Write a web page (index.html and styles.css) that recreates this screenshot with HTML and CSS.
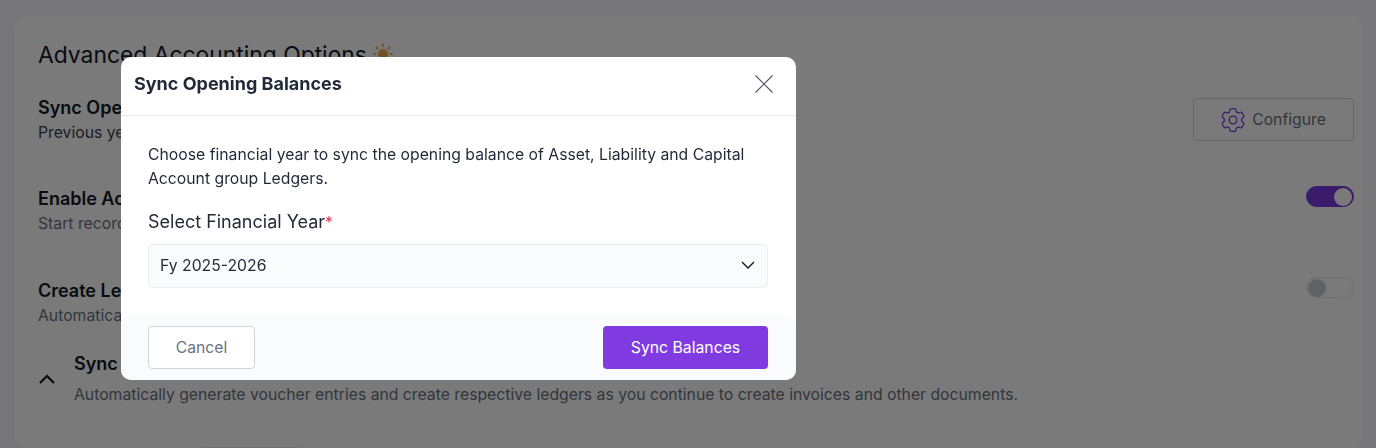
FILE: index.html
```html
<!DOCTYPE html>
<html>
<head>
	<title>Advanced Accounting Options</title>
	<link rel="stylesheet" href="styles.css">
</head>
<body>
	<div class="card">
		<h2 class="card-title">Advanced Accounting Options
			<svg class="sun" width="20" height="20" viewBox="0 0 20 20">
				<circle cx="10" cy="11" r="5" fill="#f2ab4a"/>
				<g stroke="#f2ab4a" stroke-width="2" stroke-linecap="round">
					<path d="M10 1.500v1.500M3.500 4.500l1 1M16.500 4.500l-1 1M1 11h1.500M17.500 11h1.500"/>
				</g>
			</svg>
		</h2>

		<div class="option option-first">
			<div>
				<div class="option-name">Sync Opening Balances</div>
				<div class="option-desc">Previous year closing balances can be carried forward.</div>
			</div>
			<button class="btn-configure">
				<svg width="24" height="24" viewBox="2.500 2.500 19 19" fill="none" stroke="#7c3ae0" stroke-width="1" stroke-linejoin="round">
					<path d="M9.594 3.940c.09-.542.56-.94 1.110-.94h2.593c.55 0 1.020.398 1.110.94l.213 1.281c.063.374.313.686.645.87.074.04.147.083.22.127.324.196.72.257 1.075.124l1.217-.456a1.125 1.125 0 011.370.49l1.296 2.247a1.125 1.125 0 01-.26 1.431l-1.003.827c-.293.24-.438.613-.431.992a6.759 6.759 0 010 .255c-.007.378.138.75.43.99l1.005.828c.424.35.534.954.26 1.430l-1.298 2.247a1.125 1.125 0 01-1.369.491l-1.217-.456c-.355-.133-.75-.072-1.076.124a6.570 6.570 0 01-.22.128c-.331.183-.581.495-.644.869l-.213 1.280c-.09.543-.56.941-1.110.941h-2.594c-.55 0-1.020-.398-1.110-.94l-.213-1.281c-.062-.374-.312-.686-.644-.87a6.520 6.520 0 01-.22-.127c-.325-.196-.72-.257-1.076-.124l-1.217.456a1.125 1.125 0 01-1.369-.49l-1.297-2.247a1.125 1.125 0 01.26-1.431l1.004-.827c.292-.24.437-.613.43-.992a6.932 6.932 0 010-.255c.007-.378-.138-.75-.43-.99l-1.004-.828a1.125 1.125 0 01-.26-1.430l1.297-2.247a1.125 1.125 0 011.370-.491l1.216.456c.356.133.751.072 1.076-.124.072-.044.146-.087.22-.128.332-.183.582-.495.644-.869l.214-1.281z"/>
					<circle cx="12" cy="12" r="3"/>
				</svg>
				Configure
			</button>
		</div>

		<div class="option option-second">
			<div>
				<div class="option-name">Enable Accounting</div>
				<div class="option-desc muted">Start recording accounting entries for your business.</div>
			</div>
			<span class="toggle toggle-on"><span class="knob"></span></span>
		</div>

		<div class="option option-third">
			<div>
				<div class="option-name">Create Ledgers</div>
				<div class="option-desc muted">Automatically create ledgers for your parties and items.</div>
			</div>
			<span class="toggle"><span class="knob"></span></span>
		</div>

		<div class="sync-row">
			<svg class="chevron-up" width="16" height="10" viewBox="0 0 16 10" fill="none" stroke="#111827" stroke-width="2.200">
				<path d="M1 9l7-7 7 7"/>
			</svg>
			<div>
				<div class="option-name">Sync Vouchers</div>
				<div class="option-desc muted sync-desc">Automatically generate voucher entries and create respective ledgers as you continue to create invoices and other documents.</div>
			</div>
		</div>

		<div class="next-btn"></div>
	</div>

	<div class="overlay">
		<div class="modal">
			<div class="modal-header">
				<h3>Sync Opening Balances</h3>
				<svg class="close" width="20" height="20" viewBox="0 0 20 20" stroke="#4b5563" stroke-width="1.100" fill="none">
					<path d="M1.500 1.500l17 17M18.500 1.500l-17 17"/>
				</svg>
			</div>
			<div class="modal-body">
				<p>Choose financial year to sync the opening balance of Asset, Liability and Capital Account group Ledgers.</p>
				<label class="field-label">Select Financial Year<span class="req">*</span></label>
				<div class="select">
					<span>Fy 2025-2026</span>
					<svg width="14" height="8" viewBox="0 0 14 8" fill="none" stroke="#111827" stroke-width="1.400">
						<path d="M1 1l6 6 6-6"/>
					</svg>
				</div>
			</div>
			<div class="modal-footer">
				<button class="btn btn-cancel">Cancel</button>
				<button class="btn btn-primary">Sync Balances</button>
			</div>
		</div>
	</div>
</body>
</html>
```

FILE: styles.css
```css
* {
	box-sizing: border-box;
}

html,
body {
	height: 100%;
	overflow: hidden;
}

body {
	margin: 0;
	padding: 16px 0 0 15px;
	background-color: #f8f9fc;
	font-family: Inter, "Liberation Sans", sans-serif;
	color: #111827;
}

.card {
	width: 1347px;
	height: 432px;
	padding: 24px 8px 0 23px;
	background-color: #fff;
	border-radius: 10px;
	overflow: hidden;
}

.card-title {
	margin: 0;
	font-size: 22.85px;
	line-height: 30px;
	font-weight: 400;
}

.sun {
	vertical-align: 0;
}

.option {
	display: flex;
	justify-content: space-between;
	align-items: flex-start;
}

.option-first {
	margin-top: 26px;
	height: 91px;
}

.option-second {
	height: 92px;
}

.option-third {
	height: 73px;
}

.option-name {
	font-size: 18px;
	line-height: 24px;
	font-weight: 600;
}

.option-desc {
	margin-top: 3px;
	font-size: 15.75px;
	line-height: 20px;
	color: #374151;
}

.sync-desc {
	margin-top: 9px;
}

.muted {
	color: #6b7280;
}

.btn-configure {
	display: flex;
	align-items: center;
	justify-content: center;
	gap: 7px;
	width: 161px;
	height: 43px;
	margin-top: 2px;
	background-color: #fff;
	border: 1px solid #d1d5db;
	border-radius: 4px;
	font-family: inherit;
	font-size: 15.75px;
	color: #6b7280;
}

.toggle {
	display: flex;
	align-items: center;
	width: 48px;
	height: 21px;
	margin-top: -1px;
	padding: 0 1px;
	border: 1px solid #e5e7eb;
	border-radius: 11px;
}

.option-third .toggle {
	margin-top: -2px;
}

.knob {
	width: 18px;
	height: 18px;
	border-radius: 50%;
	background-color: #c8cad4;
}

.toggle-on {
	justify-content: flex-end;
	background-color: #7c3ae0;
	border-color: #7c3ae0;
}

.toggle-on .knob {
	background-color: #fff;
}

.sync-row {
	display: flex;
	align-items: center;
	gap: 19px;
	margin-left: 1px;
}

.chevron-up {
	flex-shrink: 0;
}

.next-btn {
	width: 108px;
	height: 8px;
	margin: 42px 0 0 157px;
	border: 1px solid #e5e7eb;
	border-radius: 6px 6px 0 0;
}

.overlay {
	position: fixed;
	top: 0;
	left: 0;
	right: 0;
	bottom: 0;
	padding: 57px 0 0 121px;
	background-color: rgba(0, 0, 0, 0.52);
}

.modal {
	width: 675px;
	height: 323px;
	display: flex;
	flex-direction: column;
	background-color: #fff;
	border-radius: 10px;
	overflow: hidden;
}

.modal-header {
	display: flex;
	justify-content: space-between;
	align-items: center;
	height: 59px;
	padding: 0 22px 5px 13px;
	border-bottom: 1px solid #e5e7eb;
}

.modal-header h3 {
	margin: 0;
	font-size: 18px;
	font-weight: 700;
	color: #1f2937;
}

.modal-body {
	flex: 1;
	padding: 27px 28px 0 27px;
}

.modal-body p {
	margin: 0;
	font-size: 15.75px;
	line-height: 24px;
	color: #1f2937;
}

.field-label {
	display: block;
	height: 24px;
	margin-top: 19px;
	font-size: 18px;
	line-height: 24px;
	color: #1f2937;
}

.req {
	font-size: 15.75px;
	line-height: 1;
	color: #dc3550;
}

.select {
	display: flex;
	justify-content: space-between;
	align-items: center;
	height: 44px;
	margin-top: 10px;
	padding: 0 12px 2px 11px;
	background-color: #fafbfd;
	border: 1px solid #eceef2;
	border-radius: 4px;
	font-size: 15.75px;
	color: #1f2937;
}

.modal-footer {
	display: flex;
	justify-content: space-between;
	align-items: flex-start;
	height: 65px;
	padding: 11px 28px 0 27px;
	background-color: #fafbfd;
	border-radius: 10px;
}

.btn {
	height: 43px;
	border-radius: 4px;
	font-family: inherit;
	font-size: 15.75px;
}

.btn-cancel {
	width: 107px;
	background-color: #fff;
	border: 1px solid #d1d5db;
	color: #6b7280;
}

.btn-primary {
	width: 165px;
	background-color: #7f3bdf;
	border: none;
	color: #fff;
}
```
